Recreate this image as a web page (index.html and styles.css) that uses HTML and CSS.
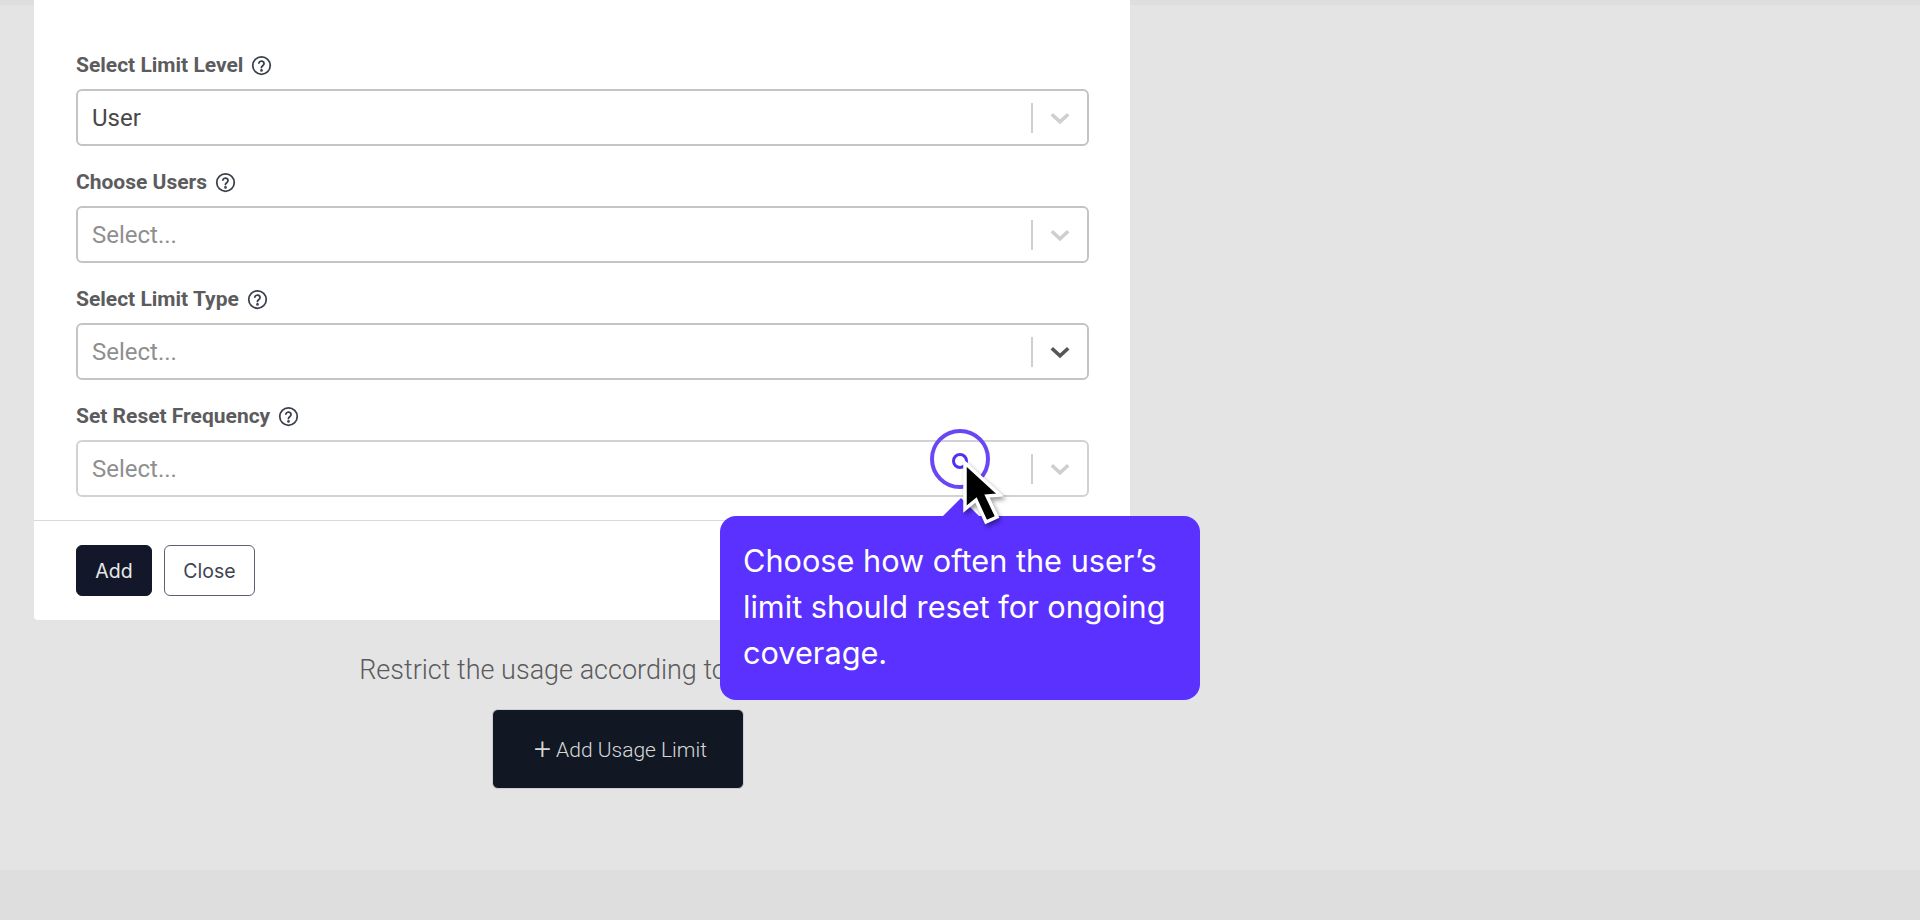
FILE: index.html
```html
<!DOCTYPE html>
<html lang="en">
<head>
<meta charset="utf-8">
<title>Usage Limit</title>
<link rel="stylesheet" href="styles.css">
</head>
<body>
<main class="page">
  <section class="modal">
    <div class="modal-body">
      <div class="field">
        <label class="label">Select Limit Level <svg class="help" viewBox="0 0 24 24"><circle cx="12" cy="12" r="10"/><path d="M9 9.2a3 3 0 0 1 5.900.8c0 2-3 2.600-3 4.400"/><circle class="dot" cx="12" cy="17.600" r=".6"/></svg></label>
        <div class="select"><span class="value">User</span><span class="sep"></span><svg class="chev" viewBox="0 0 20 20"><path d="M4.500 7.500 10 12.500l5.500-5"/></svg></div>
      </div>
      <div class="field">
        <label class="label">Choose Users <svg class="help" viewBox="0 0 24 24"><circle cx="12" cy="12" r="10"/><path d="M9 9.2a3 3 0 0 1 5.900.8c0 2-3 2.600-3 4.400"/><circle class="dot" cx="12" cy="17.600" r=".6"/></svg></label>
        <div class="select"><span class="placeholder">Select...</span><span class="sep"></span><svg class="chev" viewBox="0 0 20 20"><path d="M4.500 7.500 10 12.500l5.500-5"/></svg></div>
      </div>
      <div class="field">
        <label class="label">Select Limit Type <svg class="help" viewBox="0 0 24 24"><circle cx="12" cy="12" r="10"/><path d="M9 9.2a3 3 0 0 1 5.900.8c0 2-3 2.600-3 4.400"/><circle class="dot" cx="12" cy="17.600" r=".6"/></svg></label>
        <div class="select"><span class="placeholder">Select...</span><span class="sep"></span><svg class="chev chev-active" viewBox="0 0 20 20"><path d="M4.500 7.500 10 12.500l5.500-5"/></svg></div>
      </div>
      <div class="field">
        <label class="label">Set Reset Frequency <svg class="help" viewBox="0 0 24 24"><circle cx="12" cy="12" r="10"/><path d="M9 9.2a3 3 0 0 1 5.900.8c0 2-3 2.600-3 4.400"/><circle class="dot" cx="12" cy="17.600" r=".6"/></svg></label>
        <div class="select select-light"><span class="placeholder">Select...</span><span class="sep"></span><svg class="chev" viewBox="0 0 20 20"><path d="M4.500 7.500 10 12.500l5.500-5"/></svg></div>
      </div>
    </div>
    <div class="modal-foot">
      <button class="btn btn-dark">Add</button>
      <button class="btn btn-outline">Close</button>
    </div>
  </section>
  <div class="empty">
    <p class="empty-text">Restrict the usage according to your needs.</p>
    <button class="add-limit"><span class="plus">+</span> Add Usage Limit</button>
  </div>
</main>
<footer class="footer"></footer>

<div class="ring"></div>
<div class="ring-dot"></div>
<div class="tooltip">
  <span class="tip-arrow"></span>
  Choose how often the user’s limit should reset for ongoing coverage.
</div>
<svg class="cursor" viewBox="0 0 45 70"><path d="M5 3 5 49 16 40 26 62 37 57 27 36 40 35Z"/></svg>
</body>
</html>
```
FILE: styles.css
```css
* { box-sizing: border-box; }
html, body { margin: 0; height: 920px; overflow: hidden; }
body { display: flex; flex-direction: column; background: #e4e4e4; font-family: Roboto, "Liberation Sans", sans-serif; }

.page { flex: 1; min-height: 0; border-top: 5px solid #dedede; padding-left: 34px; }
.footer { height: 50px; background: #dedede; }

.modal { width: 1096px; margin-top: -5px; height: 620px; background: #fff; border-radius: 0 0 4px 4px; display: flex; flex-direction: column; }
.modal-body { height: 521px; padding: 53px 41px 0 42px; border-bottom: 1px solid #d9d9d9; display: flex; flex-direction: column; gap: 24px; }
.field { display: flex; flex-direction: column; gap: 12px; }
.label { display: flex; align-items: center; gap: 8px; height: 24px; font-size: 21px; font-weight: 700; color: #5c5c5e; }
.help { width: 21px; height: 21px; fill: none; stroke: #3a3f4b; stroke-width: 2; stroke-linecap: round; }
.help .dot { fill: #3a3f4b; }

.select { height: 57px; display: flex; align-items: center; padding: 0 12px 0 14px; border: 2px solid #c4c4c4; border-radius: 6px; background: #fff; }
.select-light { border-color: #d2d2d2; }
.value { flex: 1; font-size: 24px; color: #48484a; }
.placeholder { flex: 1; font-size: 24px; color: #8f8f8f; }
.sep { width: 2px; height: 30px; background: #cfcfcf; margin-right: 12px; }
.chev { width: 30px; height: 30px; fill: none; stroke: #cfcfcf; stroke-width: 2.400; }
.chev-active { stroke: #55555a; }

.modal-foot { flex: 1; padding: 24px 42px 0; display: flex; gap: 12px; align-items: flex-start; }
.btn { height: 51px; border-radius: 6px; font-family: Inter, sans-serif; font-size: 19.500px; padding: 0; }
.btn-dark { width: 76px; background: #121829; border: 1px solid #121829; color: #e8e8e8; }
.btn-outline { width: 91px; background: #fff; border: 1.500px solid #5c6170; color: #3f4453; }

.empty { width: 1168px; display: flex; flex-direction: column; align-items: center; padding-top: 31px; }
.empty-text { margin: 0; padding-right: 7px; font-size: 27px; line-height: 38px; font-weight: 300; color: #5a5a5c; white-space: nowrap; }
.add-limit { margin-top: 20px; width: 252px; height: 80px; padding: 0 0 0 5px; background: #111824; border: 1px solid #cfcfcf; border-radius: 6px; color: #d8d8d8; font-family: Roboto, sans-serif; font-weight: 300; font-size: 21px; }
.plus { font-size: 30px; line-height: 1; vertical-align: -2px; }

.ring { position: absolute; left: 930px; top: 429px; width: 60px; height: 60px; border: 4px solid #6a46f5; border-radius: 50%; }
.ring-dot { position: absolute; left: 952px; top: 453px; width: 16px; height: 16px; border: 3px solid #5530f0; border-radius: 50%; background: #fff; }
.tooltip { position: absolute; left: 720px; top: 516px; width: 480px; height: 184px; padding: 22px 23px; background: #5a31ff; border-radius: 16px; color: #fff; font-family: Inter, sans-serif; font-size: 30.700px; line-height: 46px; }
.tip-arrow { position: absolute; left: 223px; top: -18px; width: 0; height: 0; border-left: 18px solid transparent; border-right: 18px solid transparent; border-bottom: 18px solid #5a31ff; }
.cursor { position: absolute; left: 960px; top: 460px; width: 45px; height: 70px; fill: #000; stroke: #fff; stroke-width: 3.500; stroke-linejoin: miter; filter: drop-shadow(2px 3px 2px rgba(0,0,0,.4)); overflow: visible; }
```
